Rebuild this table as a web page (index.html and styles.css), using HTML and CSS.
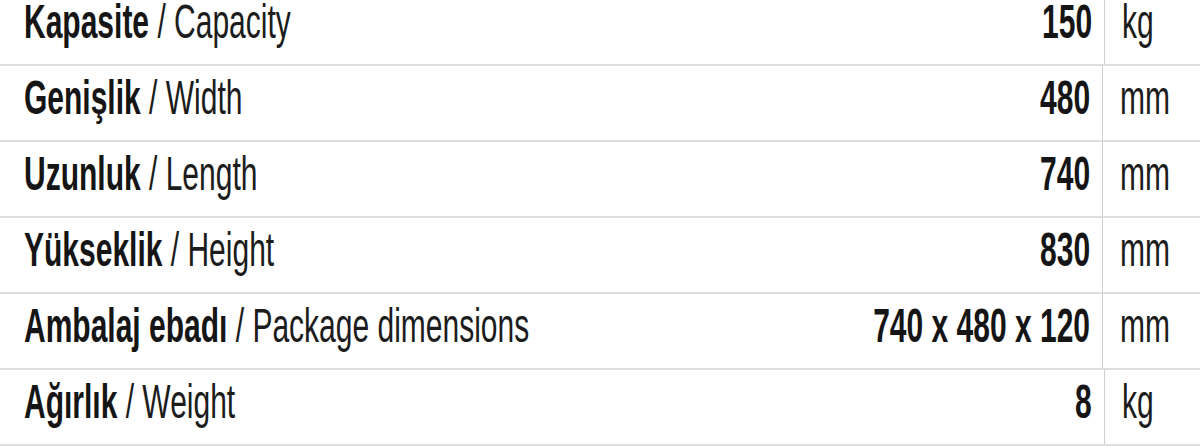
FILE: index.html
```html
<!DOCTYPE html>
<html lang="tr">
<head>
<meta charset="utf-8">
<title>Teknik Özellikler</title>
<link rel="stylesheet" href="styles.css">
</head>
<body>
<div class="spec-table">
  <div class="spec-row">
    <div class="label"><span class="txt"><b>Kapasite</b> / Capacity</span></div>
    <div class="value"><span class="txt">150</span></div>
    <div class="unit"><span class="txt">kg</span></div>
  </div>
  <div class="spec-row">
    <div class="label"><span class="txt"><b>Genişlik</b> / Width</span></div>
    <div class="value"><span class="txt">480</span></div>
    <div class="unit"><span class="txt">mm</span></div>
  </div>
  <div class="spec-row">
    <div class="label"><span class="txt"><b>Uzunluk</b> / Length</span></div>
    <div class="value"><span class="txt">740</span></div>
    <div class="unit"><span class="txt">mm</span></div>
  </div>
  <div class="spec-row">
    <div class="label"><span class="txt"><b>Yükseklik</b> / Height</span></div>
    <div class="value"><span class="txt">830</span></div>
    <div class="unit"><span class="txt">mm</span></div>
  </div>
  <div class="spec-row">
    <div class="label"><span class="txt"><b>Ambalaj ebadı</b> / Package dimensions</span></div>
    <div class="value"><span class="txt">740 x 480 x 120</span></div>
    <div class="unit"><span class="txt">mm</span></div>
  </div>
  <div class="spec-row">
    <div class="label"><span class="txt"><b>Ağırlık</b> / Weight</span></div>
    <div class="value"><span class="txt">8</span></div>
    <div class="unit"><span class="txt">kg</span></div>
  </div>
</div>
</body>
</html>
```
FILE: styles.css
```css
html, body {
  margin: 0;
  padding: 0;
  background: #ffffff;
  overflow: hidden;
}

body {
  font-family: "Liberation Sans", Arial, sans-serif;
  font-size: 48px;
  line-height: 48px;
  color: #1c1c1c;
}

.spec-table {
  margin-top: -10px;
  width: 1200px;
}

.spec-row {
  display: flex;
  height: 76px;
  box-sizing: border-box;
  border-bottom: 2px solid #dedede;
}

.label,
.value,
.unit {
  display: flex;
  align-items: center;
  padding-bottom: 10px;
  box-sizing: border-box;
  white-space: nowrap;
}

.label {
  flex: 1 1 auto;
  min-width: 0;
  padding-left: 24px;
}

.value {
  flex: 0 0 300px;
  min-width: 0;
  justify-content: flex-end;
  padding-right: 12px;
  border-right: 1px solid #cfcfcf;
  font-weight: bold;
  color: #151515;
}

.unit {
  flex: 0 0 95px;
  padding-left: 17px;
}

.txt {
  display: inline-block;
  flex-shrink: 0;
  transform: scaleX(0.625);
  transform-origin: left center;
}

.value .txt {
  transform-origin: right center;
}

.txt b {
  font-weight: bold;
  color: #151515;
}
```
